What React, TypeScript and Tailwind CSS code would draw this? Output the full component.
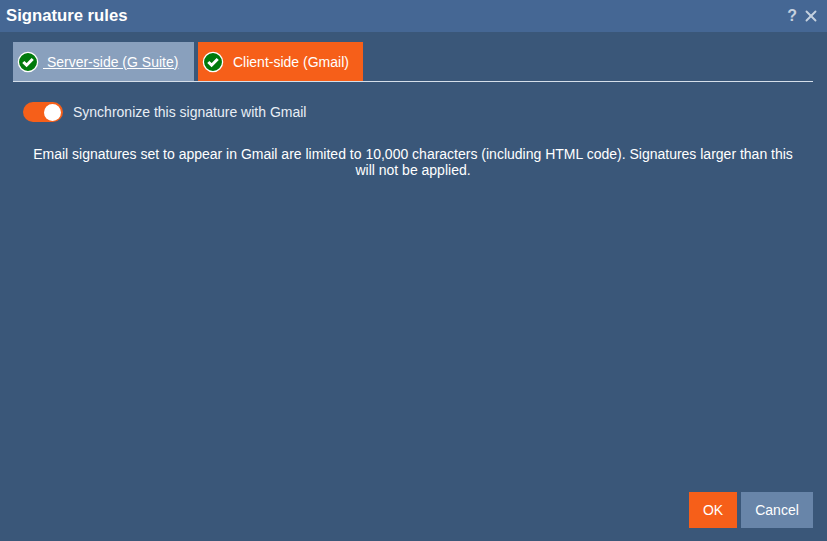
import { X } from 'lucide-react';

function CheckBadge() {
  return (
    <svg width="22" height="22" viewBox="0 0 22 22" className="shrink-0">
      <circle cx="11" cy="11" r="9.6" fill="#007a0c" stroke="#fff" strokeWidth="1.3" />
      <path d="M6.3 11 9.6 14.2 15.7 8" fill="none" stroke="#fff" strokeWidth="3" />
    </svg>
  );
}

export default function App() {
  return (
    <div className="flex h-[541px] w-[827px] flex-col overflow-hidden bg-[#3a5779] font-['Liberation_Sans',Arial,sans-serif] text-white">
      {/* barra de título */}
      <header className="flex h-8 shrink-0 items-center justify-between bg-[#456794] pl-[6px] pr-[7px]">
        <h1 className="text-[16.7px] font-bold leading-none">Signature rules</h1>
        <div className="flex items-center gap-[5px] text-[#c5d1df]">
          <span className="text-base font-bold leading-none">?</span>
          <X size={18} strokeWidth={2.5} />
        </div>
      </header>

      <main className="flex flex-1 flex-col pl-[13px] pr-[14px] pt-[10px] pb-[13px]">
        {/* pestañas */}
        <div className="flex h-10 gap-1 border-b border-[#d5dfea]">
          <a className="flex w-[181px] items-center bg-[#89a0bd] pl-[4px] text-sm underline">
            <CheckBadge />
            <span className="ml-[4px] whitespace-pre"> Server-side (G Suite)</span>
          </a>
          <a className="flex w-[165px] items-center gap-[9px] bg-[#f65f19] pl-[4px] text-sm">
            <CheckBadge />
            Client-side (Gmail)
          </a>
        </div>

        <div className="mt-[20px] flex items-center gap-[10px] pl-[10px]">
          <span className="flex h-5 w-10 items-center justify-end rounded-full bg-[#f65f19] pr-[2px]">
            <span className="size-[17px] rounded-full bg-white" />
          </span>
          <span className="text-sm text-[#e8eef5]">Synchronize this signature with Gmail</span>
        </div>

        <p className="mt-[24px] px-[10px] text-center text-sm leading-4">
          Email signatures set to appear in Gmail are limited to 10,000 characters (including HTML code). Signatures larger than this will not be applied.
        </p>

        <div className="mt-auto flex justify-end gap-1">
          <button className="h-9 w-12 bg-[#f65f19] text-sm">OK</button>
          <button className="h-9 w-[72px] bg-[#6885a9] text-sm">Cancel</button>
        </div>
      </main>
    </div>
  );
}
